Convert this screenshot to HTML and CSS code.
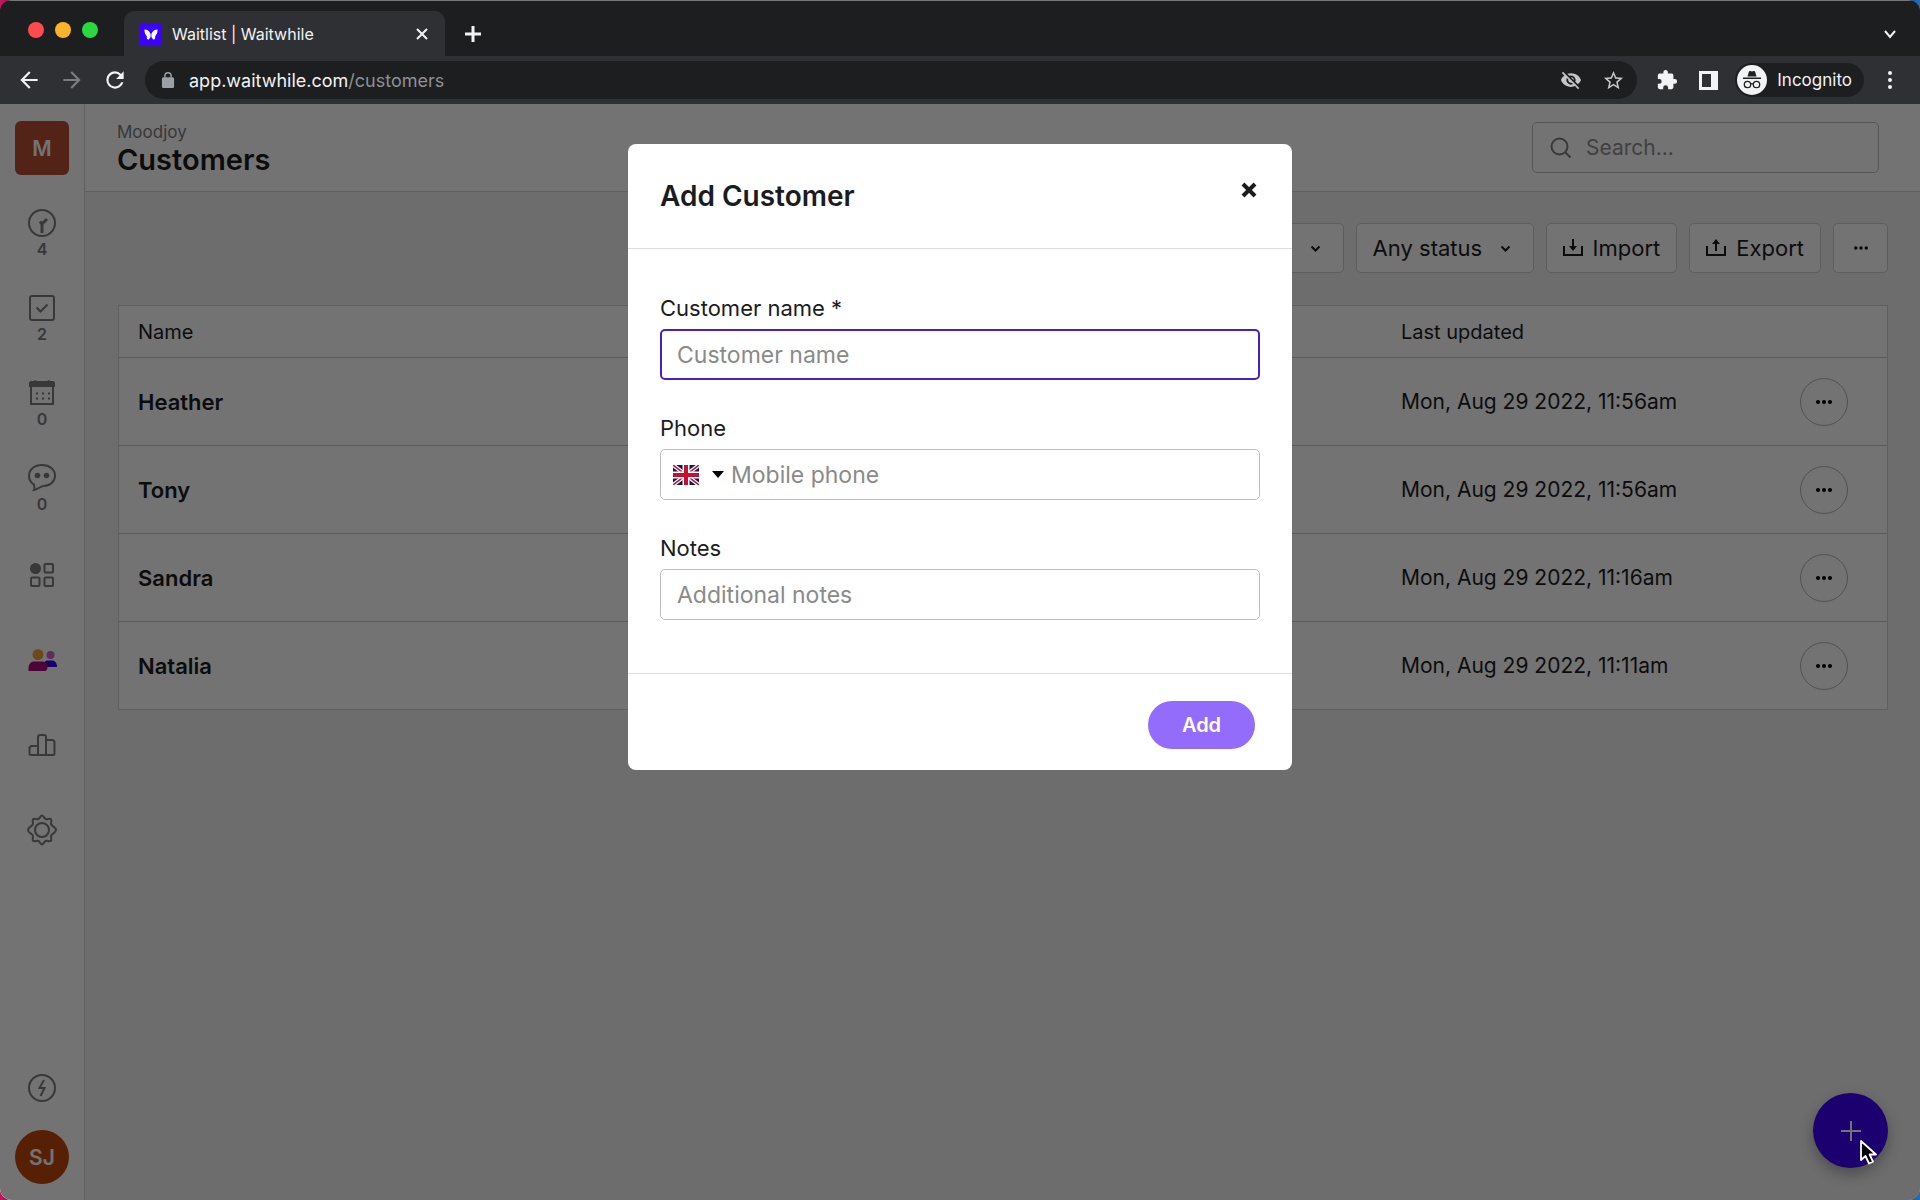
FILE: index.html
```html
<!DOCTYPE html>
<html lang="en">
<head>
<meta charset="utf-8">
<meta name="viewport" content="width=device-width, initial-scale=1">
<title>Waitlist | Waitwhile</title>
<link rel="stylesheet" href="styles.css">
</head>
<body>
<div class="window">
  <header class="chrome">
    <div class="tabstrip">
      <div class="lights"><i class="light red"></i><i class="light amber"></i><i class="light green"></i></div>
      <div class="tab">
        <svg class="favicon" viewBox="0 0 22 22"><rect width="22" height="22" fill="#3b00ff"/><path fill="#fff" d="M4.500 6.500c3 0 5.300 2 6.100 4.600v3l-1.700 2.300c-2 .3-2.500-1.600-2-3.200-1.700-1.600-2.600-4-2.400-6.700zM17.500 6.500c-3 0-5.300 2-6.100 4.600v3l1.700 2.300c2 .3 2.500-1.600 2-3.200 1.700-1.600 2.600-4 2.400-6.700z"/></svg>
        <span class="tab-title">Waitlist | Waitwhile</span>
        <button class="bare" aria-label="Close tab"><svg width="14" height="14" viewBox="0 0 14 14"><path class="w" d="M2 2l10 10M12 2L2 12"/></svg></button>
      </div>
      <button class="bare new-tab" aria-label="New tab"><svg width="18" height="18" viewBox="0 0 18 18"><path class="w bold" d="M9 1v16M1 9h16"/></svg></button>
      <button class="bare tab-list" aria-label="Search tabs"><svg width="14" height="14" viewBox="0 0 14 14"><path class="w" d="M2 4l5 6 5-6"/></svg></button>
    </div>
    <div class="toolbar">
      <div class="nav-buttons">
        <button class="bare" aria-label="Back"><svg width="26" height="26" viewBox="0 0 24 24"><path fill="#f1f3f4" d="M20 11H7.800l5.600-5.600L12 4l-8 8 8 8 1.400-1.400L7.800 13H20v-2z"/></svg></button>
        <button class="bare" aria-label="Forward"><svg width="26" height="26" viewBox="0 0 24 24"><path fill="#7b7d81" d="M4 11h12.200l-5.600-5.600L12 4l8 8-8 8-1.400-1.400 5.600-5.600H4v-2z"/></svg></button>
        <button class="bare" aria-label="Reload"><svg width="26" height="26" viewBox="0 0 24 24"><path fill="#f1f3f4" d="M17.650 6.350A7.960 7.960 0 0 0 12 4a8 8 0 1 0 7.730 10h-2.080A6 6 0 1 1 12 6c1.660 0 3.140.69 4.220 1.780L13 11h7V4l-2.350 2.350z"/></svg></button>
      </div>
      <div class="omnibox">
        <svg width="18" height="16" viewBox="2 1 20 21"><path fill="#9aa0a6" d="M18 8h-1V6A5 5 0 0 0 7 6v2H6a2 2 0 0 0-2 2v10c0 1.100.9 2 2 2h12a2 2 0 0 0 2-2V10a2 2 0 0 0-2-2zM8.900 6a3.100 3.100 0 0 1 6.200 0v2H8.900V6z"/></svg>
        <a class="url" href="#">app.waitwhile.com<span>/customers</span></a>
        <button class="bare" aria-label="Third-party cookies blocked"><svg width="22" height="22" viewBox="0 0 24 24"><path fill="#c4c7c5" d="M12 7a5 5 0 0 1 4.640 6.830l2.920 2.920A11.800 11.800 0 0 0 22.990 12 11.800 11.800 0 0 0 12 4.500c-1.400 0-2.740.25-3.980.7l2.160 2.160C10.740 7.130 11.350 7 12 7zM2 4.270l2.740 2.740A11.800 11.800 0 0 0 1 12c1.730 4.390 6 7.500 11 7.500 1.550 0 3.030-.3 4.380-.84L19.730 22 21 20.730 3.270 3 2 4.270zM7.530 9.800l1.550 1.550A3 3 0 0 0 12 15c.22 0 .44-.03.65-.08l1.550 1.550A5 5 0 0 1 7.530 9.800zm4.310-.78l3.150 3.150.02-.16a3 3 0 0 0-3-3l-.17.010z"/></svg></button>
        <button class="bare" aria-label="Bookmark this page"><svg width="23" height="23" viewBox="0 0 24 24"><path fill="#c4c7c5" d="M22 9.240l-7.190-.62L12 2 9.190 8.630 2 9.240l5.460 4.730L5.820 21 12 17.270 18.180 21l-1.630-7.030L22 9.240zM12 15.400l-3.760 2.270 1-4.280-3.320-2.880 4.380-.38L12 6.100l1.710 4.040 4.380.38-3.320 2.880 1 4.280L12 15.400z"/></svg></button>
      </div>
      <div class="extras">
        <button class="bare" aria-label="Extensions"><svg width="22" height="22" viewBox="0 0 24 24"><path fill="#f1f3f4" d="M20.500 11H19V7a2 2 0 0 0-2-2h-4V3.500a2.500 2.500 0 0 0-5 0V5H4a2 2 0 0 0-2 2v3.800h1.500a2.700 2.700 0 0 1 0 5.400H2V20c0 1.100.9 2 2 2h3.800v-1.500a2.700 2.700 0 0 1 5.400 0V22H17a2 2 0 0 0 2-2v-4h1.500a2.500 2.500 0 0 0 0-5z"/></svg></button>
        <button class="bare" aria-label="Side panel"><svg width="19" height="19" viewBox="0 0 19 19"><path fill="#f1f3f4" fill-rule="evenodd" d="M0 0h19v19H0zM3 3v13h9V3z"/></svg></button>
        <button class="incognito">
          <svg width="30" height="30" viewBox="0 0 30 30"><circle cx="15" cy="15" r="15" fill="#f1f3f4"/><path fill="#202124" d="M10.500 11.500l1.300-4.600c.2-.8.900-1 1.500-.8l1.700.5 1.700-.5c.6-.2 1.300 0 1.500.8l1.300 4.600zM6 12.500h18v1.500H6z"/><g fill="none" stroke="#202124" stroke-width="1.300"><circle cx="10.500" cy="19.500" r="3.200"/><circle cx="19.500" cy="19.500" r="3.200"/><path d="M13.700 19q1.300-.9 2.600 0"/></g></svg>
          Incognito
        </button>
        <button class="bare" aria-label="Menu"><svg width="6" height="20" viewBox="0 0 6 20" fill="#f1f3f4"><circle cx="3" cy="3" r="2"/><circle cx="3" cy="10" r="2"/><circle cx="3" cy="17" r="2"/></svg></button>
      </div>
    </div>
  </header>

  <div class="app">
    <nav class="sidebar">
      <a class="brand" href="#">M</a>
      <a class="nav-item" href="#"><svg viewBox="0 0 28 28"><circle cx="14" cy="14" r="13"/><path class="hands" d="M14 24v-9l5-5M12 12.500l2 2.500"/></svg>4</a>
      <a class="nav-item" href="#"><svg viewBox="0 0 28 28"><rect x="2" y="2" width="24" height="24" rx="2"/><path d="M8.500 13.500l4 4 7-7"/></svg>2</a>
      <a class="nav-item" href="#"><svg viewBox="0 0 28 28"><path d="M3 7v18h22V7"/><path class="solid" d="M1 8V4c0-1 1-2 2-2h3l1-1 2 1h10l2-1 1 1h3c1 0 2 1 2 2v4z"/><path stroke-dasharray="2 4" d="M8 14.500h14M8 19.500h14"/></svg>0</a>
      <a class="nav-item" href="#"><svg viewBox="0 0 28 28"><path d="M6 20.500C2.500 18.500 1 15.500 1 12 1 5.500 6.500 1 14 1s13 4.500 13 10.500-5 10.500-11.500 10.500c-3 0-5.500 3.500-9.500 4 1-1.500.5-3.500 0-5.500z"/><circle class="dot" cx="9.500" cy="11.500" r="2.800"/><circle class="dot" cx="18.500" cy="11.500" r="2.800"/></svg>0</a>
      <a class="nav-item" href="#"><svg viewBox="0 0 28 28"><circle class="dot" cx="7.500" cy="7.500" r="5.500"/><rect x="16.500" y="3" width="8.500" height="8.500" rx="1"/><rect x="3" y="16.500" width="8.500" height="8.500" rx="1"/><rect x="16.500" y="16.500" width="8.500" height="8.500" rx="1"/></svg></a>
      <a class="nav-item people" href="#"><svg viewBox="0 0 28 28"><circle cx="10" cy="8.500" r="5.500" fill="#f0a13c"/><circle cx="22.500" cy="9" r="4" fill="#d65fd0"/><path fill="#3b00e6" d="M16 21v-3c0-2 1.500-3.500 3.500-3.500H24c3 0 5 2.500 5 6.500z"/><path fill="#ae0a7c" d="M.500 25v-3c0-4 2.500-6.500 5.500-6.500h8c3.500 0 5.500 2.500 5.500 5.500 0 2-1 4-2.500 4z"/></svg></a>
      <a class="nav-item" href="#"><svg viewBox="0 0 28 28"><path d="M10 24H3a1.500 1.500 0 0 1-1.500-1.500v-5C1.500 16 2.500 15 4 15h6zM10 24V6c0-1.500 1-2 2-2h4c1.500 0 2 1 2 2v18zM18 24V9h6c1.500 0 2.500 1 2.500 2.500v11c0 1-.5 1.500-1.500 1.500z"/></svg></a>
      <a class="nav-item" href="#"><svg class="gear" viewBox="0 0 32 32"><path d="M16 1.500c1.500 0 2 2.800 3.700 3.500s4-1 5.300.2c1.200 1.200-.6 3.500.2 5.300.7 1.700 4.800 2.700 4.800 5.500s-4.100 3.800-4.800 5.500c-.8 1.800 1 4.100-.2 5.300s-3.600-.5-5.300.2S17.500 30.500 16 30.500s-2-2.800-3.700-3.500-4 1-5.300-.2c-1.200-1.200.6-3.500-.2-5.300C6.100 19.800 2 18.800 2 16s4.100-3.800 4.800-5.500C7.600 8.700 5.800 6.400 7 5.200s3.600.5 5.300-.2S14.500 1.500 16 1.500z"/><circle cx="16" cy="16" r="7"/></svg></a>
      <div class="sidebar-foot">
        <a class="nav-icon" href="#" aria-label="What's new"><svg viewBox="0 0 28 28"><circle cx="14" cy="14" r="13"/><path d="M16 6l-4.500 8h5l-4 8"/></svg></a>
        <a class="avatar" href="#">SJ</a>
      </div>
    </nav>

    <main class="main">
      <header class="page-head">
        <div>
          <p class="org">Moodjoy</p>
          <h1>Customers</h1>
        </div>
        <label class="search">
          <svg width="22" height="22" viewBox="0 0 22 22"><circle cx="9.500" cy="9.500" r="8"/><path d="M15.500 15.500l5 5"/></svg>
          <input type="search" placeholder="Search..." aria-label="Search">
        </label>
      </header>
      <section class="content">
        <div class="actions">
          <div class="select"><select aria-label="Customer type"><option>All customers</option></select><svg width="11" height="8" viewBox="0 0 11 8"><path d="M1.500 1.500l4 4 4-4"/></svg></div>
          <div class="select"><select aria-label="Status"><option>Any status</option></select><svg width="11" height="8" viewBox="0 0 11 8"><path d="M1.500 1.500l4 4 4-4"/></svg></div>
          <button class="btn"><svg width="20" height="18" viewBox="0 0 20 18"><path d="M1 7v9h18V7M10 0v9"/><path class="head" d="M6 7h8l-4 5z"/></svg>Import</button>
          <button class="btn"><svg width="20" height="18" viewBox="0 0 20 18"><path d="M1 7v9h18V7M10 12V4"/><path class="head" d="M6 5h8l-4-5z"/></svg>Export</button>
          <button class="btn more" aria-label="More actions"><svg width="14" height="4" viewBox="0 0 16 4"><circle cx="2" cy="2" r="2"/><circle cx="8" cy="2" r="2"/><circle cx="14" cy="2" r="2"/></svg></button>
        </div>
        <table class="customers">
          <thead><tr><th scope="col">Name</th><th scope="col" class="col-updated">Last updated</th><th class="col-menu"></th></tr></thead>
          <tbody>
            <tr><td class="name">Heather</td><td>Mon, Aug 29 2022, 11:56am</td><td><button class="row-menu" aria-label="Heather options"><svg width="16" height="4" viewBox="0 0 16 4"><circle cx="2" cy="2" r="2"/><circle cx="8" cy="2" r="2"/><circle cx="14" cy="2" r="2"/></svg></button></td></tr>
            <tr><td class="name">Tony</td><td>Mon, Aug 29 2022, 11:56am</td><td><button class="row-menu" aria-label="Tony options"><svg width="16" height="4" viewBox="0 0 16 4"><circle cx="2" cy="2" r="2"/><circle cx="8" cy="2" r="2"/><circle cx="14" cy="2" r="2"/></svg></button></td></tr>
            <tr><td class="name">Sandra</td><td>Mon, Aug 29 2022, 11:16am</td><td><button class="row-menu" aria-label="Sandra options"><svg width="16" height="4" viewBox="0 0 16 4"><circle cx="2" cy="2" r="2"/><circle cx="8" cy="2" r="2"/><circle cx="14" cy="2" r="2"/></svg></button></td></tr>
            <tr><td class="name">Natalia</td><td>Mon, Aug 29 2022, 11:11am</td><td><button class="row-menu" aria-label="Natalia options"><svg width="16" height="4" viewBox="0 0 16 4"><circle cx="2" cy="2" r="2"/><circle cx="8" cy="2" r="2"/><circle cx="14" cy="2" r="2"/></svg></button></td></tr>
          </tbody>
        </table>
      </section>
    </main>
    <button class="fab" aria-label="Add customer"><svg width="20" height="20" viewBox="0 0 20 20"><path d="M10 0v20M0 10h20"/></svg></button>

    <div class="backdrop">
      <form class="dialog" role="dialog" aria-labelledby="dialog-title">
        <header class="dialog-head">
          <h2 id="dialog-title">Add Customer</h2>
          <button type="button" class="bare" aria-label="Close"><svg width="16" height="16" viewBox="0 0 16 16"><path class="x" d="M2 2l12 12M14 2L2 14"/></svg></button>
        </header>
        <div class="dialog-body">
          <div class="field">
            <label for="name">Customer name *</label>
            <input id="name" class="box focused" type="text" placeholder="Customer name">
          </div>
          <div class="field">
            <label for="phone">Phone</label>
            <div class="box phone">
              <button type="button" class="country" aria-label="Country: United Kingdom">
                <svg width="26" height="20" viewBox="0 0 26 20"><path fill="#0a1a5c" d="M0 0h26v20H0z"/><path stroke="#fff" stroke-width="4" d="M0 0l26 20M26 0L0 20"/><path stroke="#c8102e" stroke-width="1.500" d="M0 0l26 20M26 0L0 20"/><path stroke="#fff" stroke-width="7" d="M13 0v20M0 10h26"/><path stroke="#c8102e" stroke-width="4" d="M13 0v20M0 10h26"/></svg>
                <svg width="12" height="7" viewBox="0 0 12 7"><path d="M0 0h12L6 7z"/></svg>
              </button>
              <input id="phone" type="tel" placeholder="Mobile phone">
            </div>
          </div>
          <div class="field">
            <label for="notes">Notes</label>
            <input id="notes" class="box" type="text" placeholder="Additional notes">
          </div>
        </div>
        <footer class="dialog-foot"><button type="button" class="primary">Add</button></footer>
      </form>
    </div>
    <svg class="cursor" width="20" height="28" viewBox="0 0 20 28"><path fill="#000" stroke="#fff" stroke-width="1.800" stroke-linejoin="round" d="M2 2v19l4.500-4 3.500 7.500 4-1.800-3.400-7.200H17z"/></svg>
  </div>
</div>
</body>
</html>
```
FILE: styles.css
```css
* { box-sizing: border-box; }
body {
  margin: 0;
  background: linear-gradient(90deg, #c2185b, #14264f 2%, #14264f 98%, #1e6fb8);
  font-family: Inter, "Noto Sans", sans-serif;
  font-size: 21px;
  color: #1b1c1e;
}
h1, h2, p { margin: 0; }
a { color: inherit; text-decoration: none; }
button, input, select { font: inherit; color: inherit; }
button { cursor: pointer; }
input:focus, select:focus { outline: none; }
svg { display: block; flex: none; }

.window {
  display: flex;
  flex-direction: column;
  min-height: 100vh;
  border-radius: 12px;
  overflow: hidden;
}
.bare { padding: 0; border: 0; background: none; }
.bare .w { fill: none; stroke: #f1f3f4; stroke-width: 2; }
.bare .bold { stroke-width: 3; }

/* Browser frame */
.chrome { background: #2f3034; color: #f1f3f4; }
.tabstrip {
  display: flex;
  align-items: center;
  height: 56px;
  padding: 10px 23px 0 28px;
  border-top: 1px solid #77787a;
  background: #1d1e20;
}
.lights { display: flex; gap: 11px; width: 96px; padding-bottom: 8px; }
.light { width: 16px; height: 16px; border-radius: 50%; }
.red { background: #ff4b50; }
.amber { background: #fbb32c; }
.green { background: #2bd840; }
.tab {
  display: flex;
  align-items: center;
  gap: 10px;
  width: 321px;
  height: 45px;
  padding: 0 16px;
  border-radius: 10px 10px 0 0;
  background: #2f3034;
  font-size: 16px;
}
.tab .favicon { width: 22px; height: 22px; }
.tab-title { flex: 1; }
.new-tab { margin-left: 19px; }
.tab-list { margin-left: auto; }
.toolbar {
  display: flex;
  align-items: center;
  height: 48px;
  padding: 0 27px 0 16px;
}
.nav-buttons { display: flex; gap: 17px; margin-right: 17px; }
.omnibox {
  display: flex;
  flex: 1;
  align-items: center;
  gap: 20px;
  height: 38px;
  padding: 0 12px 0 14px;
  border-radius: 19px;
  background: #1d1e20;
  font-size: 18px;
}
.url { flex: 1; margin-left: -8px; }
.url span { color: #8d9095; }
.extras { display: flex; align-items: center; gap: 21px; margin-left: 19px; }
.incognito {
  display: flex;
  align-items: center;
  gap: 10px;
  height: 34px;
  margin: 0 2px 0 -4px;
  padding: 0 12px 0 2px;
  border: 0;
  border-radius: 17px;
  background: #1d1e20;
  font-size: 17px;
}

/* Application */
.app {
  position: relative;
  display: grid;
  flex: 1;
  grid-template-columns: 85px 1fr;
  background: #f1f1f1;
}
.sidebar {
  display: flex;
  flex-direction: column;
  align-items: center;
  padding: 17px 0 16px;
  border-right: 1px solid #d2d2d2;
  background: #fff;
  color: #7d7d7d;
}
.brand, .avatar {
  display: grid;
  place-items: center;
  width: 54px;
  height: 54px;
  color: #fff;
  font-weight: 600;
}
.brand { margin-bottom: 17px; border-radius: 6px; background: #b84f33; }
.avatar { border-radius: 50%; background: #c0480c; }
.nav-item {
  display: flex;
  flex-direction: column;
  align-items: center;
  justify-content: center;
  width: 100%;
  height: 85px;
  font-size: 16px;
  font-weight: 600;
  line-height: 24px;
}
.sidebar svg { width: 28px; height: 28px; fill: none; stroke: #7d7d7d; stroke-width: 2; overflow: visible; }
.sidebar .gear { width: 32px; height: 32px; }
.sidebar .hands { stroke-width: 3; }
.sidebar .solid, .sidebar .dot { fill: #7d7d7d; stroke: none; }
.sidebar .people svg { stroke: none; }
.sidebar-foot {
  display: flex;
  flex-direction: column;
  align-items: center;
  gap: 28px;
  margin-top: auto;
}
.page-head {
  display: flex;
  align-items: center;
  justify-content: space-between;
  height: 88px;
  padding: 0 41px 0 32px;
  border-bottom: 1px solid #d2d2d2;
  background: #fff;
}
.org { color: #7d7d7d; font-size: 17px; line-height: 24px; }
h1 { font-size: 29px; font-weight: 600; line-height: 32px; }
.search {
  display: flex;
  align-items: center;
  gap: 14px;
  width: 347px;
  height: 51px;
  padding: 0 17px;
  border: 1px solid #bdbdbd;
  border-radius: 5px;
}
.search svg { fill: none; stroke: #7d7d7d; stroke-width: 2; }
.search input { width: 100%; padding: 0; border: 0; background: none; }
.search input::placeholder { color: #8f8f8f; }
.content { padding: 31px 32px 0 33px; }
.actions { display: flex; justify-content: flex-end; gap: 12px; margin-bottom: 32px; }
.btn, .select {
  display: flex;
  align-items: center;
  height: 50px;
  border: 1px solid #cfcfcf;
  border-radius: 5px;
  background: #fff;
  font-size: 22px;
}
.btn { gap: 10px; padding: 0 16px; }
.btn svg { fill: none; stroke: #1b1c1e; stroke-width: 2; }
.btn .head, .more svg { fill: #1b1c1e; stroke: none; }
.more { width: 55px; justify-content: center; }
.select { position: relative; }
.select select {
  height: 100%;
  padding: 0 50px 0 16px;
  border: 0;
  background: none;
  appearance: none;
}
.select svg {
  position: absolute;
  right: 22px;
  top: 21px;
  fill: none;
  stroke: #1b1c1e;
  stroke-width: 2;
  pointer-events: none;
}
.customers {
  width: 100%;
  border: 1px solid #d2d2d2;
  border-spacing: 0;
  background: #fff;
}
.customers th, .customers td { padding: 0 19px; text-align: left; }
.customers th { height: 51px; font-size: 20px; font-weight: 400; }
.customers td { height: 88px; border-top: 1px solid #cbcbcb; }
.customers .name { font-size: 22px; font-weight: 600; }
.customers .col-updated { width: 399px; }
.customers .col-menu { width: 106px; }
.row-menu {
  display: grid;
  place-items: center;
  width: 48px;
  height: 48px;
  border: 1px solid #b4b4b4;
  border-radius: 50%;
  background: none;
}
.fab {
  position: absolute;
  right: 32px;
  bottom: 32px;
  display: grid;
  place-items: center;
  width: 75px;
  height: 75px;
  border: 0;
  border-radius: 50%;
  background: #3f00f5;
  box-shadow: 0 6px 14px rgba(0, 0, 0, 0.3);
}
.fab svg { stroke: #fff; stroke-width: 2; }
.cursor { position: absolute; right: 41px; bottom: 33px; }

/* Add customer dialog */
.backdrop {
  position: absolute;
  inset: 0;
  display: flex;
  align-items: flex-start;
  justify-content: center;
  padding: 40px 16px;
  background: rgba(0, 0, 0, 0.55);
}
.dialog { width: 664px; border-radius: 8px; background: #fff; }
.dialog-head {
  display: flex;
  justify-content: space-between;
  padding: 36px 35px 36px 32px;
  border-bottom: 1px solid #dcdcdc;
}
.dialog-head .bare { align-self: flex-start; margin-top: 2px; }
.dialog-head .x { fill: none; stroke: #1b1c1e; stroke-width: 4; }
h2 { font-size: 28px; font-weight: 600; line-height: 32px; }
.dialog-body {
  display: grid;
  gap: 32px;
  padding: 43px 32px 53px;
}
.field { display: grid; gap: 5px; }
.field label { font-size: 22px; line-height: 32px; }
.box {
  width: 100%;
  height: 51px;
  padding: 0 16px;
  border: 1px solid #bdbdbd;
  border-radius: 5px;
  background: #fff;
  font-size: 23px;
}
.focused { padding: 0 15px; border: 2px solid #4a1fc4; }
.phone { display: flex; align-items: center; gap: 7px; padding: 0 12px; }
.phone input { flex: 1; min-width: 0; padding: 0; border: 0; background: none; }
.country {
  display: flex;
  align-items: center;
  gap: 13px;
  padding: 0;
  border: 0;
  background: none;
}
.dialog input::placeholder { color: #8a8a8a; }
.dialog-foot {
  display: flex;
  justify-content: flex-end;
  padding: 27px 37px 21px;
  border-top: 1px solid #dcdcdc;
}
.primary {
  width: 107px;
  height: 48px;
  border: 0;
  border-radius: 24px;
  background: #946cfb;
  color: #fff;
  font-size: 20px;
  font-weight: 600;
}
```
